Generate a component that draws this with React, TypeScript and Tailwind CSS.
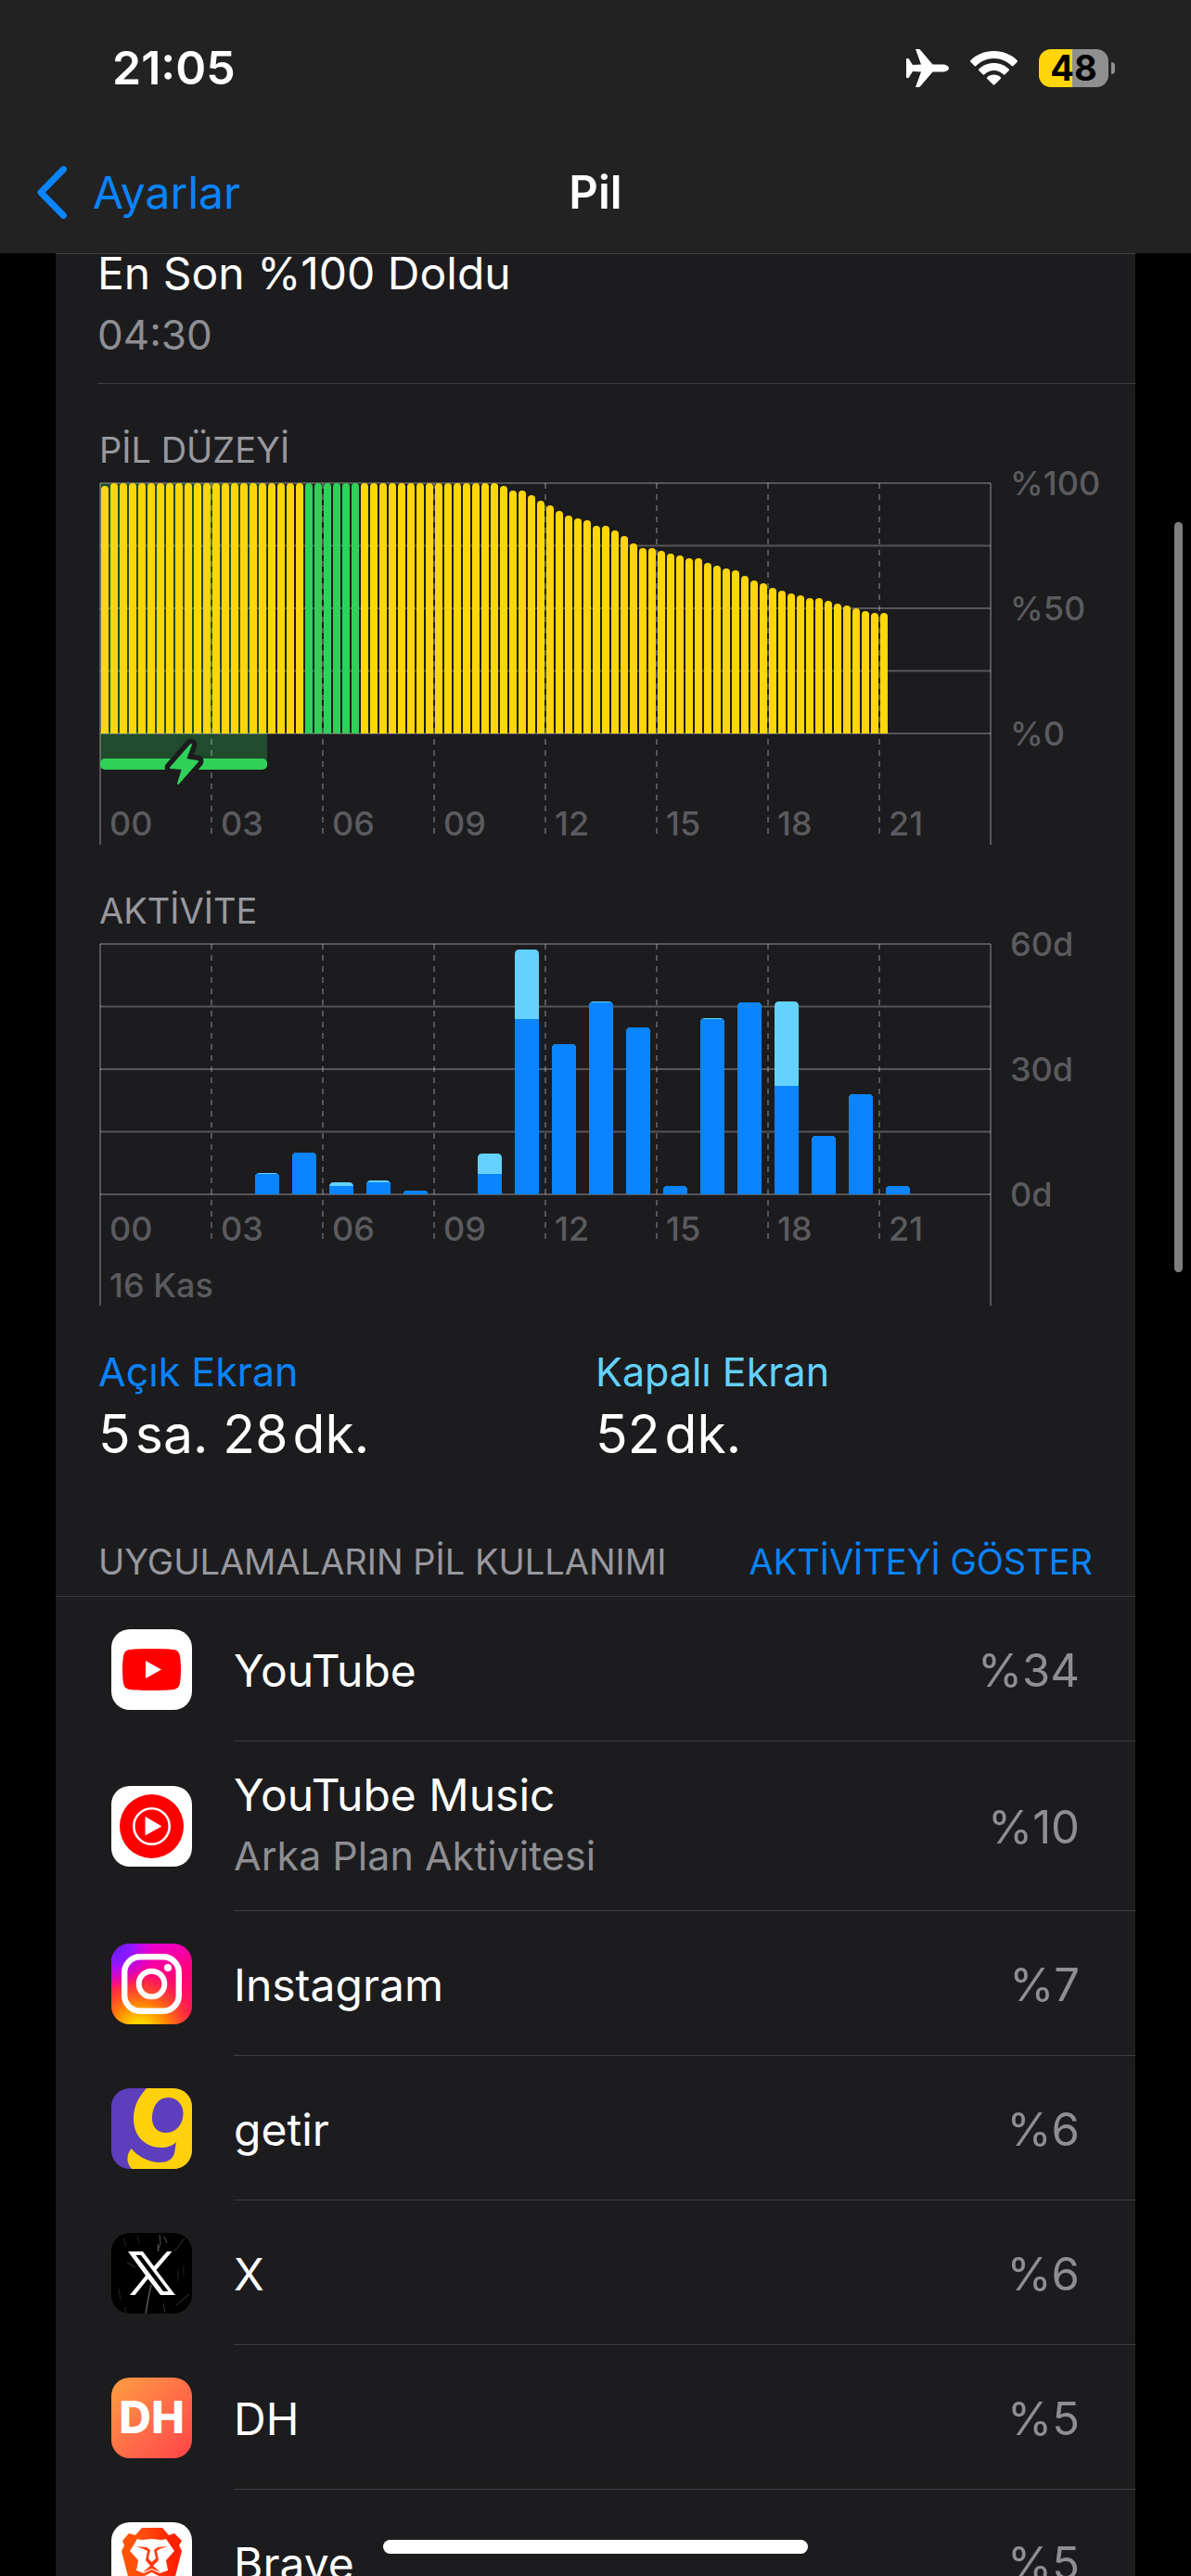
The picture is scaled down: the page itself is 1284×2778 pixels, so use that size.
import React from 'react';

// Battery level (%) in 15 minute steps, starting at midnight
const batteryLevels: number[] = [
  99, ...Array(42).fill(100),
  99, 97, 97, 95, 93, 91, 89, 87, 86, 85, 83, 83, 81, 79, 76, 74, 74, 73, 72, 71, 70, 70,
  68, 67, 66, 65, 63, 61, 60, 58, 57, 56, 55, 54, 54, 53, 52, 51, 50, 49, 48, 48,
];

// Low power mode is off between these two samples
const GREEN_FROM = 22;
const GREEN_TO = 27;

// Usage per hour, in tenths of a minute
const activity = [
  { hour: 4, on: 49, off: 2 },
  { hour: 5, on: 100, off: 0 },
  { hour: 6, on: 20, off: 9 },
  { hour: 7, on: 29, off: 4 },
  { hour: 8, on: 9, off: 0 },
  { hour: 10, on: 49, off: 49 },
  { hour: 11, on: 420, off: 167 },
  { hour: 12, on: 360, off: 0 },
  { hour: 13, on: 460, off: 2 },
  { hour: 14, on: 400, off: 0 },
  { hour: 15, on: 20, off: 0 },
  { hour: 16, on: 420, off: 2 },
  { hour: 17, on: 460, off: 0 },
  { hour: 18, on: 260, off: 202 },
  { hour: 19, on: 140, off: 0 },
  { hour: 20, on: 240, off: 0 },
  { hour: 21, on: 20, off: 0 },
];

const HOURS = ['00', '03', '06', '09', '12', '15', '18', '21'];
const TOP = 16;
const HEIGHT = 270;
const BASE = TOP + HEIGHT;

interface ChartProps {
  label: string;
  yLabels: string[];
  hourLabelY: number;
  dashEnd: number;
  underlay?: React.ReactNode;
  children: React.ReactNode;
}

const Chart: React.FC<ChartProps> = ({ label, yLabels, hourLabelY, dashEnd, underlay, children }) => (
  <svg viewBox="0 0 1080 408" className="block w-full overflow-visible" role="img" aria-label={label}>
    {underlay}
    <g stroke="#ffffff" strokeOpacity="0.26">
      {[0, 1, 2, 3, 4].map((i) => (
        <line key={i} x1="1" x2="961" y1={TOP + (i * HEIGHT) / 4} y2={TOP + (i * HEIGHT) / 4} strokeWidth="2" />
      ))}
      <line x1="1" x2="1" y1={TOP} y2="406" strokeWidth="2" />
      <line x1="961" x2="961" y1={TOP} y2="406" strokeWidth="2" />
      {HOURS.slice(1).map((hour, i) => (
        <line
          key={hour}
          x1={(i + 1) * 120 + 1}
          x2={(i + 1) * 120 + 1}
          y1={TOP}
          y2={dashEnd}
          strokeWidth="2"
          strokeDasharray="6 6"
        />
      ))}
    </g>
    {children}
    <g className="fill-[#5b5b5f] text-[36px] font-medium">
      {HOURS.map((hour, i) => (
        <text key={hour} x={i * 120 + 11} y={hourLabelY}>{hour}</text>
      ))}
      {yLabels.map((text, i) => (
        <text key={text} x="982" y={TOP + 13 + (i * HEIGHT) / 2}>{text}</text>
      ))}
    </g>
  </svg>
);

const BatteryChart = () => (
  <Chart
    label="Pil düzeyi"
    yLabels={['%100', '%50', '%0']}
    hourLabelY={396}
    dashEnd={400}
    underlay={<rect x="1" y={TOP} width="180" height="303" fill="#214b2d" />}
  >
    {batteryLevels.map((level, i) => {
      const y = BASE - Math.round(level * 2.7);
      return (
        <path
          key={i}
          d={`M${i * 10 + 2} ${BASE}V${y + 4}a4 4 0 0 1 8 0V${BASE}z`}
          fill={i >= GREEN_FROM && i <= GREEN_TO ? '#30d158' : '#ffd60a'}
        />
      );
    })}
    {/* Charging period */}
    <rect x="1" y="313" width="180" height="12" rx="5" fill="#30d158" />
    <path
      d="M99 298L77 323L90 324L85 340L106 316L93 314z"
      fill="#1c1c1e"
      stroke="#1c1c1e"
      strokeWidth="13"
      strokeLinejoin="round"
    />
    <path
      d="M99 298L77 323L90 324L85 340L106 316L93 314z"
      fill="#30d158"
      stroke="#30d158"
      strokeWidth="2"
      strokeLinejoin="round"
    />
  </Chart>
);

const ActivityChart = () => (
  <Chart label="Aktivite" yLabels={['60d', '30d', '0d']} hourLabelY={336} dashEnd={340}>
    {activity.map(({ hour, on, off }) => {
      const x = hour * 40 + 8;
      const total = Math.round(((on + off) * 4.5) / 10);
      const onHeight = Math.round((on * 4.5) / 10);
      const r = Math.min(5, total);
      return (
        <g key={hour}>
          <clipPath id={`bar-${hour}`}>
            <path d={`M${x} ${BASE}V${BASE - total + r}q0 -${r} ${r} -${r}h${26 - 2 * r}q${r} 0 ${r} ${r}V${BASE}z`} />
          </clipPath>
          <g clipPath={`url(#bar-${hour})`}>
            <rect x={x} y={BASE - total} width="26" height={total} fill="#64d2ff" />
            <rect x={x} y={BASE - onHeight} width="26" height={onHeight} fill="#0a84ff" />
          </g>
        </g>
      );
    })}
    <text x="11" y="397" className="fill-[#5b5b5f] text-[36px] font-medium">16 Kas</text>
  </Chart>
);

const YouTubeIcon = () => (
  <svg viewBox="0 0 87 87" className="size-full bg-white">
    <path d="M43.500 21c12 0 22 .4 25 1.300c3 .9 4.600 2.700 5.300 5.700c1.600 8 1.600 23 0 31c-.7 3-2.300 4.800-5.300 5.700c-6 1.700-44 1.700-50 0c-3-.9-4.600-2.700-5.300-5.700c-1.600-8-1.600-23 0-31c.7-3 2.300-4.800 5.300-5.700c3-.9 13-1.300 25-1.300z" fill="#ff0000" />
    <path d="M37 34v19l17-9.500z" fill="#fff" />
  </svg>
);

const YouTubeMusicIcon = () => (
  <svg viewBox="0 0 87 87" className="size-full bg-white">
    <circle cx="43.500" cy="43.500" r="34.500" fill="#ff0000" />
    <circle cx="43.500" cy="43.500" r="19.200" fill="none" stroke="#fff" strokeWidth="2.600" />
    <path d="M36.500 33v20.500l18-10z" fill="#fff" />
  </svg>
);

const InstagramIcon = () => (
  <svg viewBox="0 0 87 87" className="size-full">
    <defs>
      <linearGradient id="ig-base" x1="0.2" y1="0" x2="0.6" y2="1">
        <stop offset="0" stopColor="#e400e8" />
        <stop offset="0.5" stopColor="#ff0080" />
        <stop offset="1" stopColor="#ff1a5a" />
      </linearGradient>
      <radialGradient id="ig-warm" cx="0.35" cy="1.1" r="0.85">
        <stop offset="0.15" stopColor="#ffd600" />
        <stop offset="0.4" stopColor="#ff8a00" />
        <stop offset="0.7" stopColor="#ff3a30" stopOpacity="0.8" />
        <stop offset="1" stopColor="#ff0069" stopOpacity="0" />
      </radialGradient>
      <radialGradient id="ig-cool" cx="0.05" cy="0.05" r="0.5">
        <stop offset="0" stopColor="#6a1bff" />
        <stop offset="0.4" stopColor="#8f18ff" />
        <stop offset="1" stopColor="#d300e8" stopOpacity="0" />
      </radialGradient>
    </defs>
    <rect width="87" height="87" fill="url(#ig-base)" />
    <rect width="87" height="87" fill="url(#ig-warm)" />
    <rect width="87" height="87" fill="url(#ig-cool)" />
    <rect x="14.200" y="14.200" width="58.600" height="58.600" rx="17" fill="none" stroke="#fff" strokeWidth="6.400" />
    <circle cx="43.500" cy="43.500" r="13.800" fill="none" stroke="#fff" strokeWidth="6" />
    <circle cx="61" cy="26" r="4" fill="#fff" />
  </svg>
);

const GetirIcon = () => (
  <svg viewBox="0 0 87 87" className="size-full bg-[#5d3ebc]">
    <path
      d="M38 0C27 12 24 22 24 33C24 53 38 64 54 64C60 64 66 62 70 58L68 70C66 77 60 80 52 80C40 80 28 73 21.500 65C16 72 16 81 22 87H87V0z"
      fill="#ffd10d"
    />
    <path
      d="M61 10C71 10 78 18 77.500 28C77 40 69 48 59 48C49 48 43.500 41 44 31C44.500 19 51 10 61 10z"
      fill="#5d3ebc"
    />
  </svg>
);

const XIcon = () => (
  <svg viewBox="0 0 87 87" className="size-full bg-black">
    <g stroke="#8a8a8a" fill="none" strokeOpacity="0.6">
      <path d="M52 2l1 9l-3 8M57 4l3 7M50 12l1 8" />
      <path d="M43 56l-3 14l-3 17" strokeWidth="1.600" />
      <path d="M56 76l2 10M70 78l14-12M79 6L68 20M17 32l9 5" strokeOpacity="0.4" />
      <path d="M13 5l3 10M28 3l2 9M14 80l3 7M72 40v12M8 60l2 12M78 36v10" strokeOpacity="0.25" />
    </g>
    <path
      d="M18 20H34L46 36L60 20H65.500L48.500 40L69 67H53L39.500 49.500L25.500 67H20L37 46zM26.500 24L56 63H61.500L32 24z"
      fill="#fff"
      fillRule="evenodd"
    />
  </svg>
);

const DHIcon = () => (
  <div className="flex size-full items-center justify-center bg-linear-to-br from-[#ff9f40] via-[#ff6f48] to-[#ff4048] text-[48px] leading-none font-extrabold text-white">
    DH
  </div>
);

const BraveIcon = () => (
  <svg viewBox="0 0 87 87" className="size-full bg-white">
    <defs>
      <linearGradient id="brave-mane" x1="0" x2="1">
        <stop offset="0" stopColor="#ff5500" />
        <stop offset="0.4" stopColor="#ff4a10" />
        <stop offset="0.85" stopColor="#ff2000" />
      </linearGradient>
    </defs>
    <path
      d="M33 6H55L62 14L68 12L76 20L73 25L76 31L68 62C66 68 60 72 43.500 83C27 72 21 68 19 62L11 31L14 25L12 20L19 12L26 14z"
      fill="url(#brave-mane)"
    />
    <path
      d="M28 18C34 20 38 18 43.500 18C49 18 53 20 59 18L68 31L59 41L61 52L52 55L43.500 51L35 55L27 52L29 41L20 31z"
      fill="#fff"
    />
    <path
      d="M27 26L38 27L42 30L40 39L43.500 43L48 39L46 30L50 27L61 26L52 29L49 31L51 41L45 47L53 54L43.500 50L34 54L42 47L37 41L39 31L35 29z"
      fill="#ff3a0c"
    />
    <path d="M43.500 54L55 60L43.500 70L32 60z" fill="#fff" />
  </svg>
);

interface AppUsage {
  name: string;
  detail?: string;
  percent: string;
  icon: React.ReactNode;
}

const apps: AppUsage[] = [
  { name: 'YouTube', percent: '%34', icon: <YouTubeIcon /> },
  { name: 'YouTube Music', detail: 'Arka Plan Aktivitesi', percent: '%10', icon: <YouTubeMusicIcon /> },
  { name: 'Instagram', percent: '%7', icon: <InstagramIcon /> },
  { name: 'getir', percent: '%6', icon: <GetirIcon /> },
  { name: 'X', percent: '%6', icon: <XIcon /> },
  { name: 'DH', percent: '%5', icon: <DHIcon /> },
  { name: 'Brave', percent: '%5', icon: <BraveIcon /> },
];

const AppRow: React.FC<{ app: AppUsage }> = ({ app }) => (
  <li className="flex shrink-0 items-stretch gap-[45px] pl-[60px]">
    <div className="flex items-center">
      <div className="size-[87px] overflow-hidden rounded-[20px]">{app.icon}</div>
    </div>
    <div
      className={`flex flex-1 items-center justify-between border-b border-[#3d3d40] pt-[4px] pr-[60px] ${
        app.detail ? 'h-[183px]' : 'h-[156px]'
      }`}
    >
      <div>
        <p className="text-[48px] leading-[60px]">{app.name}</p>
        {app.detail && <p className="text-[43px] leading-[70px] text-[#8e8e93]">{app.detail}</p>}
      </div>
      <span className="text-[49px] leading-[60px] text-[#8e8e93]">{app.percent}</span>
    </div>
  </li>
);

const StatusBar = () => (
  <div className="flex h-[146px] items-center justify-between pr-[82px] pl-[121px]">
    <time className="text-[50px] leading-[60px] font-semibold">21:05</time>
    <div className="flex items-center gap-[23px]">
      <svg viewBox="0 0 46 41" className="h-[41px] w-[46px]" fill="#fff" aria-label="Uçak modu">
        <path d="M10 0H13.500C14.500 0 15 .5 15.500 1.200L28.500 16.500H39C43 16.500 46 18.300 46 20.500S43 24.500 39 24.500H28.500L15.500 39.800C15 40.500 14.500 41 13.500 41H10L16 24.500L7 24L3.500 29.500C3 30.500 2.500 31 1.500 31H0V10H1.500C2.500 10 3 10.500 3.500 11.500L7 17L16 16.500z" />
      </svg>
      <svg viewBox="0 0 51 37" className="h-[37px] w-[51px]" fill="#fff" aria-label="Wi-Fi">
        <path d="M25.500 0C35.500 0 44.500 3.900 50.500 10C51.200 10.700 51.200 11.300 50.500 12L46.500 16C45.900 16.600 45.300 16.600 44.700 16C39.700 11 33 8 25.500 8S11.300 11 6.300 16C5.700 16.600 5.100 16.600 4.500 16L.5 12C-.2 11.300-.2 10.700.5 10C6.500 3.900 15.500 0 25.500 0z" />
        <path d="M25.500 13C31.800 13 37.500 15.400 41.500 19.300C42.200 20 42.200 20.600 41.500 21.300L37.500 25.200C36.900 25.800 36.300 25.800 35.600 25.200C33 22.700 29.500 21 25.500 21S18 22.700 15.400 25.200C14.700 25.800 14.100 25.800 13.500 25.200L9.500 21.300C8.800 20.600 8.800 20 9.500 19.300C13.500 15.400 19.200 13 25.500 13z" />
        <path d="M25.500 25.500C28.300 25.500 30.900 26.500 32.700 28.200C33.300 28.800 33.300 29.300 32.700 29.900L26.400 36.300C25.800 36.900 25.200 36.900 24.600 36.300L18.300 29.900C17.700 29.300 17.700 28.800 18.300 28.200C20.100 26.500 22.700 25.500 25.500 25.500z" />
      </svg>
      <div className="flex items-center gap-[3px]">
        <div className="flex h-[41px] w-[75px] items-center justify-center rounded-[13px] bg-linear-to-r from-[#ffd60a] from-48% to-[#8f8f8f] to-48% text-[38px] leading-none font-bold text-black">
          48
        </div>
        <div className="h-[13px] w-[4px] rounded-r-full bg-[#8f8f8f]" />
      </div>
    </div>
  </div>
);

export default function App() {
  return (
    <div className="relative flex h-screen flex-col overflow-hidden bg-black font-['Inter','Liberation_Sans',sans-serif] text-white">
      <header className="shrink-0 bg-[#222222]">
        <StatusBar />
        <nav className="grid h-[127px] grid-cols-3 items-center pb-[4px] leading-[60px]">
          <a href="#ayarlar" className="flex items-center gap-[28px] pl-[39px] text-[48px] text-[#0a84ff]">
            <svg viewBox="0 0 33 57" className="h-[57px] w-[33px]" fill="none" aria-hidden="true">
              <path d="M29.500 3.500L5 28.500L29.500 53.500" stroke="#0a84ff" strokeWidth="7" strokeLinecap="round" strokeLinejoin="round" />
            </svg>
            Ayarlar
          </a>
          <h1 className="text-center text-[49px] font-semibold">Pil</h1>
        </nav>
      </header>

      <main className="mx-[60px] min-h-0 flex-1 border-t border-[#3d3d40] bg-[#1c1c1e]">
        <section className="ml-[45px] border-b border-[#3d3d40] pt-px pb-[32px]">
          <p className="text-[48px] leading-[40px]">En Son %100 Doldu</p>
          <p className="mt-[26px] text-[44px] leading-[40px] text-[#8e8e93]">04:30</p>
        </section>

        <section className="pt-[51px] pr-[37px] pl-[47px]">
          <h2 className="text-[38px] leading-[40px] text-[#98989f]">PİL DÜZEYİ</h2>
          <BatteryChart />
          <h2 className="mt-[49px] text-[38px] leading-[40px] text-[#98989f]">AKTİVİTE</h2>
          <ActivityChart />
        </section>

        <dl className="mt-[44px] grid grid-cols-2 pr-[46px] pl-[46px]">
          <div>
            <dt className="text-[43px] leading-[50px] text-[#0a84ff]">Açık Ekran</dt>
            <dd className="mt-[7px] text-[57px] leading-[72px]">5&#8202;sa. 28&#8202;dk.</dd>
          </div>
          <div>
            <dt className="text-[43px] leading-[50px] text-[#64d2ff]">Kapalı Ekran</dt>
            <dd className="mt-[7px] text-[57px] leading-[72px]">52&#8202;dk.</dd>
          </div>
        </dl>

        <section className="mt-[81px]">
          <div className="flex items-center justify-between border-b border-[#3d3d40] px-[46px] pb-[17px] text-[38px] leading-[40px]">
            <h2 className="text-[#98989f]">UYGULAMALARIN PİL KULLANIMI</h2>
            <button type="button" className="text-[#0a84ff]">AKTİVİTEYİ GÖSTER</button>
          </div>
          <ul>
            {apps.map((app) => (
              <AppRow key={app.name} app={app} />
            ))}
          </ul>
        </section>
      </main>

      {/* Scroll indicator and home bar lie over the page */}
      <div className="absolute top-[563px] right-[9px] h-[809px] w-[9px] rounded-full bg-[#7f7f7f]" />
      <div className="absolute bottom-[24px] left-1/2 h-[15px] w-[458px] -translate-x-1/2 rounded-full bg-white" />
    </div>
  );
}
